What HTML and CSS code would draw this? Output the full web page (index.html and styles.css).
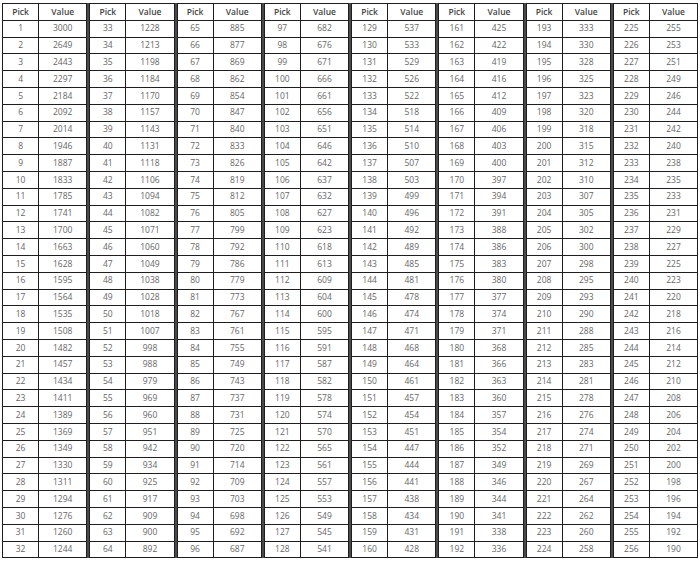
FILE: index.html
```html
<!DOCTYPE html>
<html lang="en">
<head>
<meta charset="utf-8">
<title>Draft pick value chart</title>
<link rel="stylesheet" href="styles.css">
</head>
<body>
<div class="grid">
<table class="t"><colgroup><col class="cp"><col class="cv"></colgroup>
<thead><tr><th>Pick</th><th>Value</th></tr></thead><tbody>
<tr><td>1</td><td>3000</td></tr><tr><td>2</td><td>2649</td></tr><tr><td>3</td><td>2443</td></tr><tr><td>4</td><td>2297</td></tr>
<tr><td>5</td><td>2184</td></tr><tr><td>6</td><td>2092</td></tr><tr><td>7</td><td>2014</td></tr><tr><td>8</td><td>1946</td></tr>
<tr><td>9</td><td>1887</td></tr><tr><td>10</td><td>1833</td></tr><tr><td>11</td><td>1785</td></tr><tr><td>12</td><td>1741</td></tr>
<tr><td>13</td><td>1700</td></tr><tr><td>14</td><td>1663</td></tr><tr><td>15</td><td>1628</td></tr><tr><td>16</td><td>1595</td></tr>
<tr><td>17</td><td>1564</td></tr><tr><td>18</td><td>1535</td></tr><tr><td>19</td><td>1508</td></tr><tr><td>20</td><td>1482</td></tr>
<tr><td>21</td><td>1457</td></tr><tr><td>22</td><td>1434</td></tr><tr><td>23</td><td>1411</td></tr><tr><td>24</td><td>1389</td></tr>
<tr><td>25</td><td>1369</td></tr><tr><td>26</td><td>1349</td></tr><tr><td>27</td><td>1330</td></tr><tr><td>28</td><td>1311</td></tr>
<tr><td>29</td><td>1294</td></tr><tr><td>30</td><td>1276</td></tr><tr><td>31</td><td>1260</td></tr><tr><td>32</td><td>1244</td></tr>
</tbody></table>
<table class="t"><colgroup><col class="cp"><col class="cv"></colgroup>
<thead><tr><th>Pick</th><th>Value</th></tr></thead><tbody>
<tr><td>33</td><td>1228</td></tr><tr><td>34</td><td>1213</td></tr><tr><td>35</td><td>1198</td></tr><tr><td>36</td><td>1184</td></tr>
<tr><td>37</td><td>1170</td></tr><tr><td>38</td><td>1157</td></tr><tr><td>39</td><td>1143</td></tr><tr><td>40</td><td>1131</td></tr>
<tr><td>41</td><td>1118</td></tr><tr><td>42</td><td>1106</td></tr><tr><td>43</td><td>1094</td></tr><tr><td>44</td><td>1082</td></tr>
<tr><td>45</td><td>1071</td></tr><tr><td>46</td><td>1060</td></tr><tr><td>47</td><td>1049</td></tr><tr><td>48</td><td>1038</td></tr>
<tr><td>49</td><td>1028</td></tr><tr><td>50</td><td>1018</td></tr><tr><td>51</td><td>1007</td></tr><tr><td>52</td><td>998</td></tr>
<tr><td>53</td><td>988</td></tr><tr><td>54</td><td>979</td></tr><tr><td>55</td><td>969</td></tr><tr><td>56</td><td>960</td></tr>
<tr><td>57</td><td>951</td></tr><tr><td>58</td><td>942</td></tr><tr><td>59</td><td>934</td></tr><tr><td>60</td><td>925</td></tr>
<tr><td>61</td><td>917</td></tr><tr><td>62</td><td>909</td></tr><tr><td>63</td><td>900</td></tr><tr><td>64</td><td>892</td></tr>
</tbody></table>
<table class="t"><colgroup><col class="cp"><col class="cv"></colgroup>
<thead><tr><th>Pick</th><th>Value</th></tr></thead><tbody>
<tr><td>65</td><td>885</td></tr><tr><td>66</td><td>877</td></tr><tr><td>67</td><td>869</td></tr><tr><td>68</td><td>862</td></tr>
<tr><td>69</td><td>854</td></tr><tr><td>70</td><td>847</td></tr><tr><td>71</td><td>840</td></tr><tr><td>72</td><td>833</td></tr>
<tr><td>73</td><td>826</td></tr><tr><td>74</td><td>819</td></tr><tr><td>75</td><td>812</td></tr><tr><td>76</td><td>805</td></tr>
<tr><td>77</td><td>799</td></tr><tr><td>78</td><td>792</td></tr><tr><td>79</td><td>786</td></tr><tr><td>80</td><td>779</td></tr>
<tr><td>81</td><td>773</td></tr><tr><td>82</td><td>767</td></tr><tr><td>83</td><td>761</td></tr><tr><td>84</td><td>755</td></tr>
<tr><td>85</td><td>749</td></tr><tr><td>86</td><td>743</td></tr><tr><td>87</td><td>737</td></tr><tr><td>88</td><td>731</td></tr>
<tr><td>89</td><td>725</td></tr><tr><td>90</td><td>720</td></tr><tr><td>91</td><td>714</td></tr><tr><td>92</td><td>709</td></tr>
<tr><td>93</td><td>703</td></tr><tr><td>94</td><td>698</td></tr><tr><td>95</td><td>692</td></tr><tr><td>96</td><td>687</td></tr>
</tbody></table>
<table class="t"><colgroup><col class="cp"><col class="cv"></colgroup>
<thead><tr><th>Pick</th><th>Value</th></tr></thead><tbody>
<tr><td>97</td><td>682</td></tr><tr><td>98</td><td>676</td></tr><tr><td>99</td><td>671</td></tr><tr><td>100</td><td>666</td></tr>
<tr><td>101</td><td>661</td></tr><tr><td>102</td><td>656</td></tr><tr><td>103</td><td>651</td></tr><tr><td>104</td><td>646</td></tr>
<tr><td>105</td><td>642</td></tr><tr><td>106</td><td>637</td></tr><tr><td>107</td><td>632</td></tr><tr><td>108</td><td>627</td></tr>
<tr><td>109</td><td>623</td></tr><tr><td>110</td><td>618</td></tr><tr><td>111</td><td>613</td></tr><tr><td>112</td><td>609</td></tr>
<tr><td>113</td><td>604</td></tr><tr><td>114</td><td>600</td></tr><tr><td>115</td><td>595</td></tr><tr><td>116</td><td>591</td></tr>
<tr><td>117</td><td>587</td></tr><tr><td>118</td><td>582</td></tr><tr><td>119</td><td>578</td></tr><tr><td>120</td><td>574</td></tr>
<tr><td>121</td><td>570</td></tr><tr><td>122</td><td>565</td></tr><tr><td>123</td><td>561</td></tr><tr><td>124</td><td>557</td></tr>
<tr><td>125</td><td>553</td></tr><tr><td>126</td><td>549</td></tr><tr><td>127</td><td>545</td></tr><tr><td>128</td><td>541</td></tr>
</tbody></table>
<table class="t"><colgroup><col class="cp"><col class="cv"></colgroup>
<thead><tr><th>Pick</th><th>Value</th></tr></thead><tbody>
<tr><td>129</td><td>537</td></tr><tr><td>130</td><td>533</td></tr><tr><td>131</td><td>529</td></tr><tr><td>132</td><td>526</td></tr>
<tr><td>133</td><td>522</td></tr><tr><td>134</td><td>518</td></tr><tr><td>135</td><td>514</td></tr><tr><td>136</td><td>510</td></tr>
<tr><td>137</td><td>507</td></tr><tr><td>138</td><td>503</td></tr><tr><td>139</td><td>499</td></tr><tr><td>140</td><td>496</td></tr>
<tr><td>141</td><td>492</td></tr><tr><td>142</td><td>489</td></tr><tr><td>143</td><td>485</td></tr><tr><td>144</td><td>481</td></tr>
<tr><td>145</td><td>478</td></tr><tr><td>146</td><td>474</td></tr><tr><td>147</td><td>471</td></tr><tr><td>148</td><td>468</td></tr>
<tr><td>149</td><td>464</td></tr><tr><td>150</td><td>461</td></tr><tr><td>151</td><td>457</td></tr><tr><td>152</td><td>454</td></tr>
<tr><td>153</td><td>451</td></tr><tr><td>154</td><td>447</td></tr><tr><td>155</td><td>444</td></tr><tr><td>156</td><td>441</td></tr>
<tr><td>157</td><td>438</td></tr><tr><td>158</td><td>434</td></tr><tr><td>159</td><td>431</td></tr><tr><td>160</td><td>428</td></tr>
</tbody></table>
<table class="t"><colgroup><col class="cp"><col class="cv"></colgroup>
<thead><tr><th>Pick</th><th>Value</th></tr></thead><tbody>
<tr><td>161</td><td>425</td></tr><tr><td>162</td><td>422</td></tr><tr><td>163</td><td>419</td></tr><tr><td>164</td><td>416</td></tr>
<tr><td>165</td><td>412</td></tr><tr><td>166</td><td>409</td></tr><tr><td>167</td><td>406</td></tr><tr><td>168</td><td>403</td></tr>
<tr><td>169</td><td>400</td></tr><tr><td>170</td><td>397</td></tr><tr><td>171</td><td>394</td></tr><tr><td>172</td><td>391</td></tr>
<tr><td>173</td><td>388</td></tr><tr><td>174</td><td>386</td></tr><tr><td>175</td><td>383</td></tr><tr><td>176</td><td>380</td></tr>
<tr><td>177</td><td>377</td></tr><tr><td>178</td><td>374</td></tr><tr><td>179</td><td>371</td></tr><tr><td>180</td><td>368</td></tr>
<tr><td>181</td><td>366</td></tr><tr><td>182</td><td>363</td></tr><tr><td>183</td><td>360</td></tr><tr><td>184</td><td>357</td></tr>
<tr><td>185</td><td>354</td></tr><tr><td>186</td><td>352</td></tr><tr><td>187</td><td>349</td></tr><tr><td>188</td><td>346</td></tr>
<tr><td>189</td><td>344</td></tr><tr><td>190</td><td>341</td></tr><tr><td>191</td><td>338</td></tr><tr><td>192</td><td>336</td></tr>
</tbody></table>
<table class="t"><colgroup><col class="cp"><col class="cv"></colgroup>
<thead><tr><th>Pick</th><th>Value</th></tr></thead><tbody>
<tr><td>193</td><td>333</td></tr><tr><td>194</td><td>330</td></tr><tr><td>195</td><td>328</td></tr><tr><td>196</td><td>325</td></tr>
<tr><td>197</td><td>323</td></tr><tr><td>198</td><td>320</td></tr><tr><td>199</td><td>318</td></tr><tr><td>200</td><td>315</td></tr>
<tr><td>201</td><td>312</td></tr><tr><td>202</td><td>310</td></tr><tr><td>203</td><td>307</td></tr><tr><td>204</td><td>305</td></tr>
<tr><td>205</td><td>302</td></tr><tr><td>206</td><td>300</td></tr><tr><td>207</td><td>298</td></tr><tr><td>208</td><td>295</td></tr>
<tr><td>209</td><td>293</td></tr><tr><td>210</td><td>290</td></tr><tr><td>211</td><td>288</td></tr><tr><td>212</td><td>285</td></tr>
<tr><td>213</td><td>283</td></tr><tr><td>214</td><td>281</td></tr><tr><td>215</td><td>278</td></tr><tr><td>216</td><td>276</td></tr>
<tr><td>217</td><td>274</td></tr><tr><td>218</td><td>271</td></tr><tr><td>219</td><td>269</td></tr><tr><td>220</td><td>267</td></tr>
<tr><td>221</td><td>264</td></tr><tr><td>222</td><td>262</td></tr><tr><td>223</td><td>260</td></tr><tr><td>224</td><td>258</td></tr>
</tbody></table>
<table class="t"><colgroup><col class="cp"><col class="cv"></colgroup>
<thead><tr><th>Pick</th><th>Value</th></tr></thead><tbody>
<tr><td>225</td><td>255</td></tr><tr><td>226</td><td>253</td></tr><tr><td>227</td><td>251</td></tr><tr><td>228</td><td>249</td></tr>
<tr><td>229</td><td>246</td></tr><tr><td>230</td><td>244</td></tr><tr><td>231</td><td>242</td></tr><tr><td>232</td><td>240</td></tr>
<tr><td>233</td><td>238</td></tr><tr><td>234</td><td>235</td></tr><tr><td>235</td><td>233</td></tr><tr><td>236</td><td>231</td></tr>
<tr><td>237</td><td>229</td></tr><tr><td>238</td><td>227</td></tr><tr><td>239</td><td>225</td></tr><tr><td>240</td><td>223</td></tr>
<tr><td>241</td><td>220</td></tr><tr><td>242</td><td>218</td></tr><tr><td>243</td><td>216</td></tr><tr><td>244</td><td>214</td></tr>
<tr><td>245</td><td>212</td></tr><tr><td>246</td><td>210</td></tr><tr><td>247</td><td>208</td></tr><tr><td>248</td><td>206</td></tr>
<tr><td>249</td><td>204</td></tr><tr><td>250</td><td>202</td></tr><tr><td>251</td><td>200</td></tr><tr><td>252</td><td>198</td></tr>
<tr><td>253</td><td>196</td></tr><tr><td>254</td><td>194</td></tr><tr><td>255</td><td>192</td></tr><tr><td>256</td><td>190</td></tr>
</tbody></table>
</div>
</body>
</html>
```
FILE: styles.css
```css
html, body {
  margin: 0;
  background: #ffffff;
}
body {
  padding: 3px 2px 0 2px;
  font-family: "Open Sans", "Liberation Sans", sans-serif;
  font-size: 8.5px;
  color: #666666;
}
.grid {
  display: flex;
  gap: 2px;
  background: #4a4a4a;
}
.t {
  flex: 1 1 0;
  width: 0;
  background: #ffffff;
  border-collapse: collapse;
  table-layout: fixed;
  border: 1px solid #1e1e1e;
}
.cp { width: 43%; }
.cv { width: 57%; }
.t tr {
  height: 16.8px;
}
.t th, .t td {
  border: 1px solid #1e1e1e;
  padding: 0;
  text-align: center;
  vertical-align: middle;
  line-height: 1;
  white-space: nowrap;
}
.t th {
  font-weight: 600;
  color: #444444;
}
```
